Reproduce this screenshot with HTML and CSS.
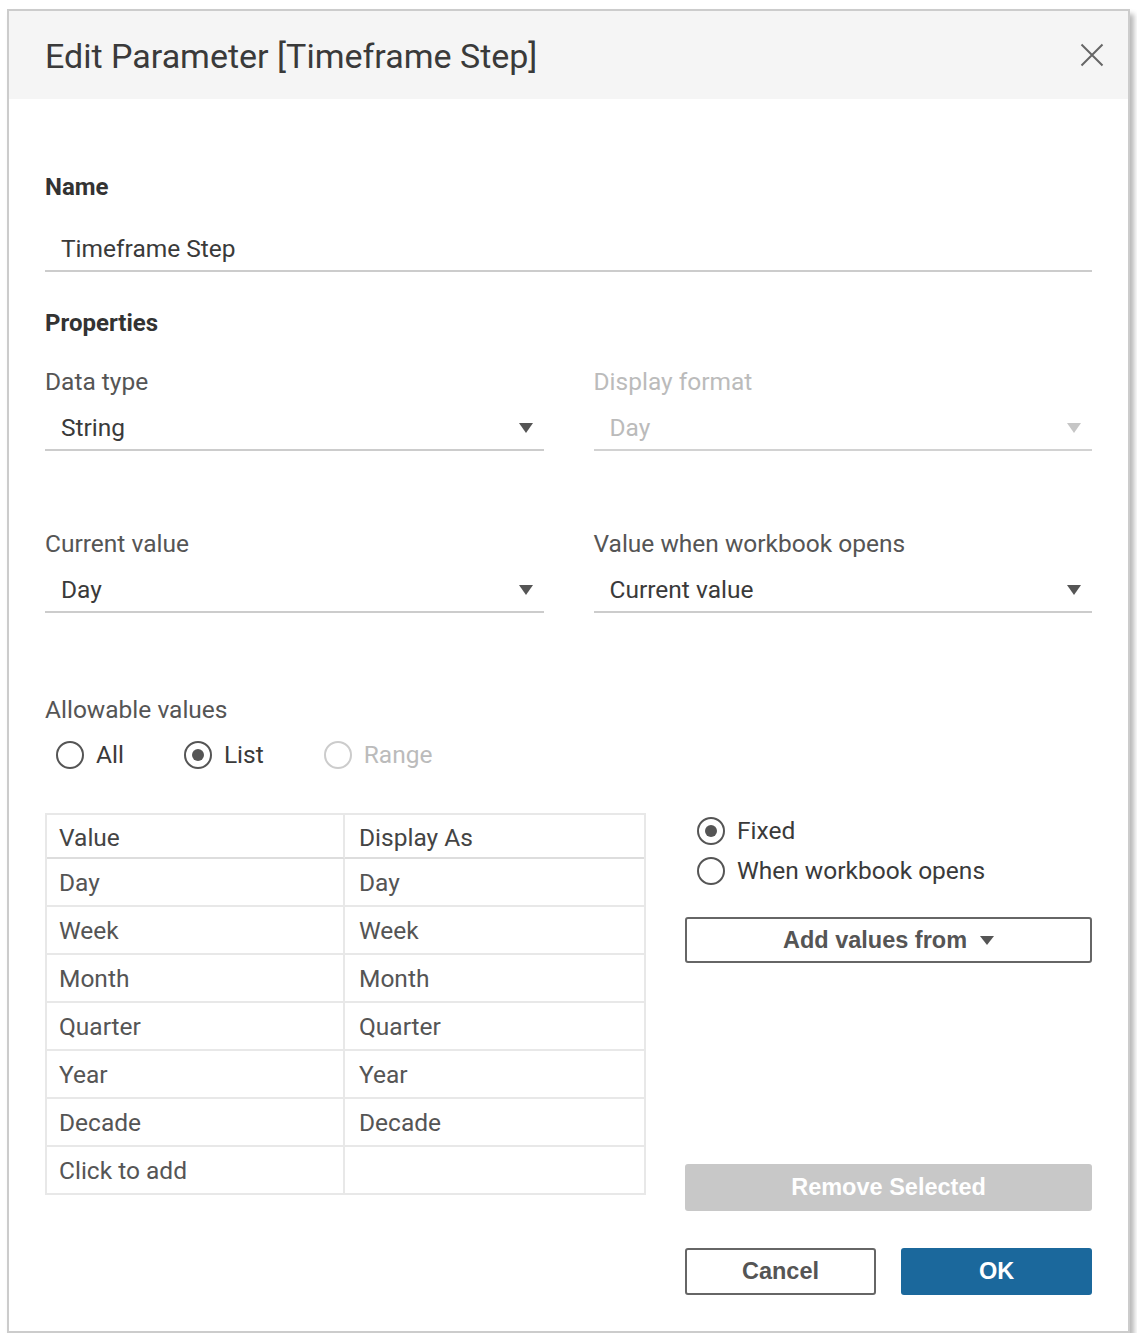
FILE: index.html
```html
<!DOCTYPE html>
<html>
<head>
<meta charset="utf-8">
<title>Edit Parameter</title>
<link rel="stylesheet" href="styles.css">
</head>
<body>
<div class="dialog">
  <div class="header">
    <div class="title">Edit Parameter [Timeframe Step]</div>
    <svg class="close" width="24" height="24" viewBox="0 0 24 24"><path d="M1.5 1.5L22.5 22.5M22.5 1.5L1.5 22.5" stroke="#666" stroke-width="2" fill="none"/></svg>
  </div>
  <div class="content">
    <div class="section-title name-title">Name</div>
    <div class="input">Timeframe Step</div>

    <div class="section-title props-title">Properties</div>

    <div class="row row-first">
      <div class="field">
        <div class="label">Data type</div>
        <div class="select"><span>String</span><span class="caret"></span></div>
      </div>
      <div class="field disabled">
        <div class="label">Display format</div>
        <div class="select"><span>Day</span><span class="caret"></span></div>
      </div>
    </div>

    <div class="row row-second">
      <div class="field">
        <div class="label">Current value</div>
        <div class="select"><span>Day</span><span class="caret"></span></div>
      </div>
      <div class="field">
        <div class="label">Value when workbook opens</div>
        <div class="select"><span>Current value</span><span class="caret"></span></div>
      </div>
    </div>

    <div class="label allow-label">Allowable values</div>
    <div class="radio-group">
      <div class="radio"><span class="dot"></span><span>All</span></div>
      <div class="radio checked"><span class="dot"></span><span>List</span></div>
      <div class="radio disabled"><span class="dot"></span><span>Range</span></div>
    </div>

    <div class="lower">
      <div class="grid-table">
        <div class="cell head c1">Value</div>
        <div class="cell head c2">Display As</div>
        <div class="cell c1">Day</div>
        <div class="cell c2">Day</div>
        <div class="cell c1">Week</div>
        <div class="cell c2">Week</div>
        <div class="cell c1">Month</div>
        <div class="cell c2">Month</div>
        <div class="cell c1">Quarter</div>
        <div class="cell c2">Quarter</div>
        <div class="cell c1">Year</div>
        <div class="cell c2">Year</div>
        <div class="cell c1">Decade</div>
        <div class="cell c2">Decade</div>
        <div class="cell c1 last">Click to add</div>
        <div class="cell c2 last"></div>
      </div>

      <div class="side">
        <div class="radio checked side-fixed"><span class="dot"></span><span>Fixed</span></div>
        <div class="radio side-when"><span class="dot"></span><span>When workbook opens</span></div>
        <div class="btn btn-outline add-btn"><span>Add values from</span><span class="caret btn-caret"></span></div>
        <div class="btn btn-disabled remove-btn">Remove Selected</div>
        <div class="actions">
          <div class="btn btn-outline">Cancel</div>
          <div class="btn btn-primary">OK</div>
        </div>
      </div>
    </div>
  </div>
</div>
</body>
</html>
```

FILE: styles.css
```css
html, body {
  margin: 0;
  padding: 0;
  background: #ffffff;
}

body {
  font-family: Roboto, "Liberation Sans", Arial, sans-serif;
  color: #3a3a3a;
}

.dialog {
  box-sizing: border-box;
  margin: 9px 0 0 7px;
  width: 1123px;
  height: 1324px;
  border: 2px solid #cccccc;
  background: #ffffff;
  box-shadow: 4px 5px 5px rgba(0, 0, 0, 0.28);
}

.header {
  height: 88px;
  background: #f5f5f5;
  display: flex;
  align-items: center;
  justify-content: space-between;
  padding: 0 24px 0 36px;
}

.title {
  font-size: 34px;
  line-height: 40px;
  color: #3a3a3a;
  font-weight: 400;
  padding-top: 2px;
}

.close {
  display: block;
}

.content {
  padding: 0 36px;
}

.section-title {
  font-size: 24px;
  line-height: 30px;
  font-weight: 700;
  color: #333333;
}

.name-title {
  margin-top: 73px;
}

.props-title {
  margin-top: 36px;
}

.input {
  margin-top: 32px;
  padding: 0 0 6px 16px;
  font-size: 24.5px;
  line-height: 30px;
  color: #3a3a3a;
  border-bottom: 2px solid #cccccc;
}

.row {
  display: grid;
  grid-template-columns: 1fr 1fr;
  column-gap: 50px;
}

.row-first {
  margin-top: 29px;
}

.row-second {
  margin-top: 78px;
}

.label {
  font-size: 24.5px;
  line-height: 30px;
  color: #555555;
}

.select {
  margin-top: 16px;
  display: flex;
  align-items: center;
  justify-content: space-between;
  padding: 0 11px 6px 16px;
  font-size: 24.5px;
  line-height: 30px;
  color: #3a3a3a;
  border-bottom: 2px solid #cccccc;
}

.caret {
  width: 0;
  height: 0;
  border-left: 7.5px solid transparent;
  border-right: 7.5px solid transparent;
  border-top: 10px solid #555555;
}

.field.disabled .label,
.field.disabled .select {
  color: #bbbbbb;
}

.field.disabled .select {
  border-bottom-color: #d2d2d2;
}

.field.disabled .caret {
  border-top-color: #c6c6c6;
}

.allow-label {
  margin-top: 82px;
}

.radio-group {
  margin-top: 15px;
  display: flex;
  gap: 60px;
  padding-left: 11px;
}

.radio {
  display: flex;
  align-items: center;
  gap: 12px;
  font-size: 24.5px;
  line-height: 30px;
  color: #3a3a3a;
}

.dot {
  box-sizing: border-box;
  width: 28px;
  height: 28px;
  border: 2px solid #555555;
  border-radius: 50%;
  display: flex;
  align-items: center;
  justify-content: center;
}

.radio.checked .dot::after {
  content: "";
  width: 12px;
  height: 12px;
  border-radius: 50%;
  background: #555555;
}

.radio.disabled {
  color: #bbbbbb;
}

.radio.disabled .dot {
  border-color: #cccccc;
}

.lower {
  margin-top: 43px;
  display: grid;
  grid-template-columns: 601px 407px;
  column-gap: 39px;
  align-items: start;
}

.grid-table {
  border: 2px solid #e8e8e8;
  display: grid;
  grid-template-columns: 298px 1fr;
}

.cell {
  box-sizing: border-box;
  height: 48px;
  border-bottom: 2px solid #e8e8e8;
  font-size: 24.5px;
  line-height: 48px;
  color: #555555;
  padding-left: 12px;
  white-space: nowrap;
}

.cell.c1 {
  border-right: 2px solid #e8e8e8;
}

.cell.c2 {
  padding-left: 14px;
}

.cell.head {
  height: 44px;
  line-height: 46px;
  color: #444444;
  border-bottom-color: #dddddd;
}

.cell.last {
  height: 46px;
  border-bottom: none;
}

.side {
  display: flex;
  flex-direction: column;
}

.side .radio {
  padding-left: 12px;
}

.side-fixed {
  margin-top: 3px;
}

.side-when {
  margin-top: 10px;
}

.btn {
  box-sizing: border-box;
  display: flex;
  align-items: center;
  justify-content: center;
  border-radius: 3px;
  font-family: "Liberation Sans", Arial, sans-serif;
  font-weight: 700;
  font-size: 23.5px;
  height: 47px;
}

.btn-outline {
  border: 2px solid #666666;
  color: #555555;
  background: #ffffff;
}

.add-btn {
  margin-top: 31px;
  height: 46px;
  gap: 13px;
}

.btn-caret {
  border-top-color: #555555;
  border-left-width: 7px;
  border-right-width: 7px;
  border-top-width: 9px;
}

.btn-disabled {
  background: #c8c8c8;
  color: #ffffff;
}

.remove-btn {
  margin-top: 201px;
}

.actions {
  margin-top: 37px;
  display: grid;
  grid-template-columns: 1fr 1fr;
  column-gap: 25px;
}

.btn-primary {
  background: #1b689c;
  color: #ffffff;
}
```
